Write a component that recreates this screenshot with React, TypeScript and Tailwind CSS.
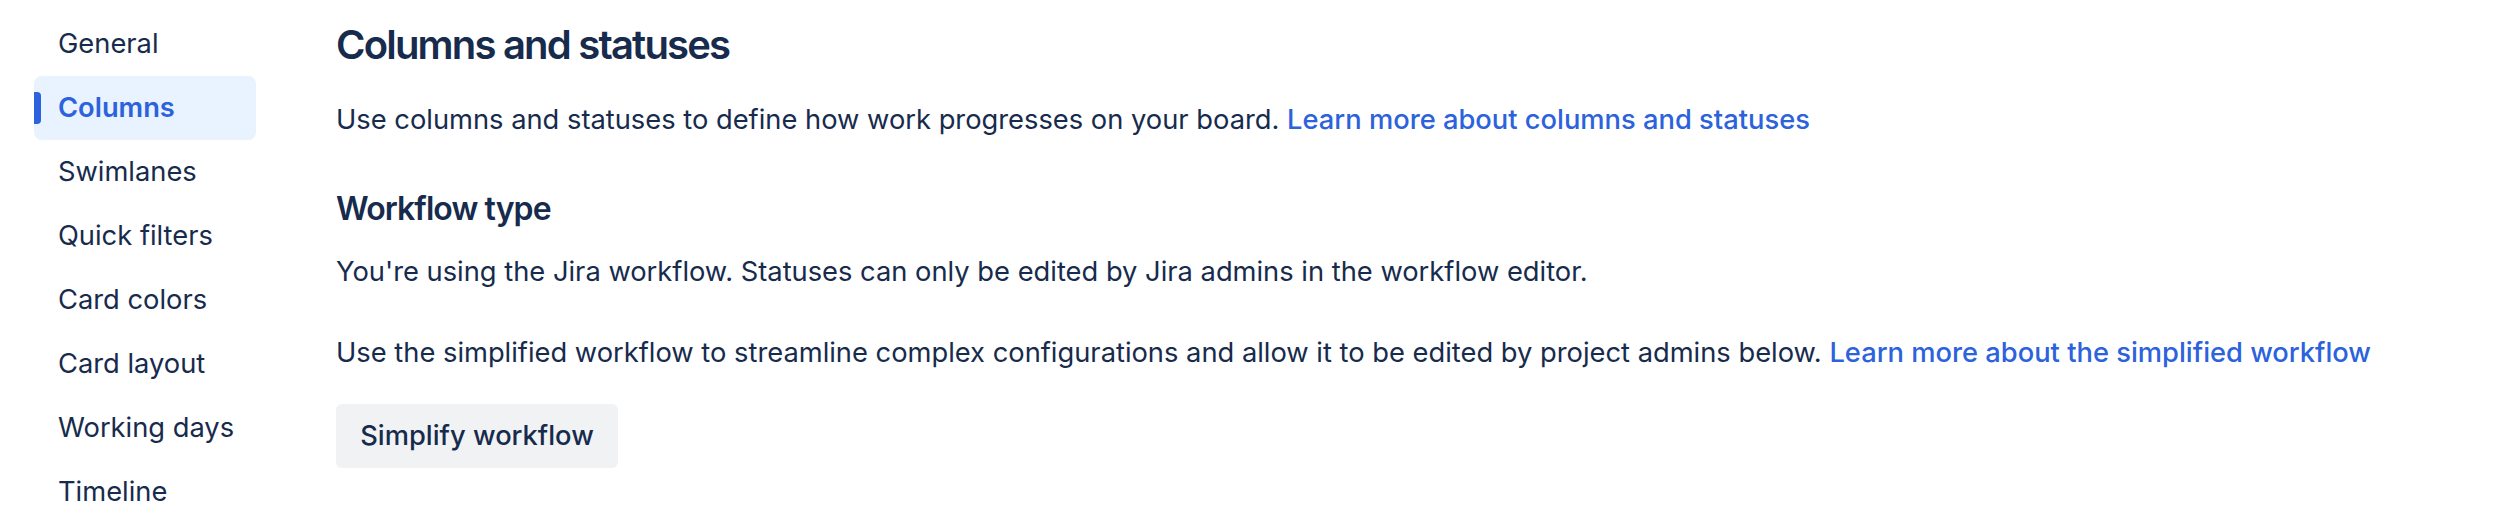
import React from "react";

const items = [
  "General",
  "Columns",
  "Swimlanes",
  "Quick filters",
  "Card colors",
  "Card layout",
  "Working days",
  "Timeline",
];

export default function App() {
  return (
    <div
      className="w-[2494px] h-[516px] overflow-hidden bg-white text-[#172B4D] flex"
      style={{ fontFamily: "Inter, 'Noto Sans', sans-serif" }}
    >
      <nav className="ml-[34px] mt-[12px] w-[222px] flex flex-col shrink-0">
        {items.map((it) => {
          const active = it === "Columns";
          return (
            <div
              key={it}
              className={
                active
                  ? "relative h-[64px] leading-[64px] pl-[24px] rounded-[8px] bg-[#E9F2FF] text-[#2C62DC] font-semibold text-[27.3px]"
                  : "relative h-[64px] leading-[64px] pl-[24px] rounded-[8px] text-[27.3px]"
              }
            >
              {active && (
                <span className="absolute left-0 top-[16px] w-[7px] h-[32px] rounded-r-[4px] bg-[#2C62DC]" />
              )}
              {it}
            </div>
          );
        })}
      </nav>
      <main className="ml-[80px] flex-1 flex flex-col items-start">
        <h1 className="mt-[21px] text-[40px] leading-[48px] font-semibold tracking-[-1.8px]">
          Columns and statuses
        </h1>
        <p className="mt-[31px] text-[27.3px] leading-[40px]">
          Use columns and statuses to define how work progresses on your board.{" "}
          <a className="text-[#2C62DC] font-medium">
            Learn more about columns and statuses
          </a>
        </p>
        <h2 className="mt-[49px] text-[32px] leading-[40px] font-semibold tracking-[-0.9px]">
          Workflow type
        </h2>
        <p className="mt-[23px] text-[27.3px] leading-[40px]">
          You're using the Jira workflow. Statuses can only be edited by Jira
          admins in the workflow editor.
        </p>
        <p className="mt-[41px] text-[27.3px] leading-[40px]">
          Use the simplified workflow to streamline complex configurations and
          allow it to be edited by project admins below.{" "}
          <a className="text-[#2C62DC] font-medium">
            Learn more about the simplified workflow
          </a>
        </p>
        <button className="mt-[31px] h-[64px] w-[282px] whitespace-nowrap rounded-[6px] bg-[#F1F2F4] text-[27.3px] leading-[64px] font-medium text-[#172B4D]">
          Simplify workflow
        </button>
      </main>
    </div>
  );
}
